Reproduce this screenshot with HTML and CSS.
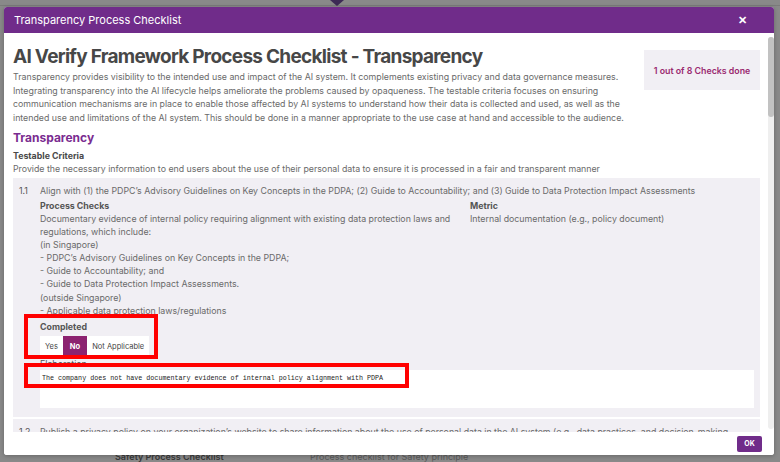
FILE: index.html
```html
<!DOCTYPE html>
<html lang="en">
<head>
<meta charset="utf-8">
<title>Transparency Process Checklist</title>
<link rel="stylesheet" href="styles.css">
</head>
<body>
<div class="page">
  <div class="page-top"><span class="page-logo"></span></div>
  <div class="page-spacer"></div>
  <div class="page-row">
    <span class="page-row-title">Safety Process Checklist</span>
    <span class="page-row-desc">Process checklist for Safety principle</span>
  </div>
</div>

<div class="modal">
  <div class="modal-header">
    <span class="modal-title">Transparency Process Checklist</span>
    <span class="modal-close">&#x2715;</span>
  </div>
  <div class="modal-main">
    <div class="modal-body">
      <div class="intro">
        <div class="intro-text">
          <h1 class="main-title">AI Verify Framework Process Checklist - Transparency</h1>
          <p class="intro-desc">Transparency provides visibility to the intended use and impact of the AI system. It complements existing privacy and data governance measures. Integrating transparency into the AI lifecycle helps ameliorate the problems caused by opaqueness. The testable criteria focuses on ensuring communication mechanisms are in place to enable those affected by AI systems to understand how their data is collected and used, as well as the intended use and limitations of the AI system. This should be done in a manner appropriate to the use case at hand and accessible to the audience.</p>
        </div>
        <div class="badge">1 out of 8 Checks done</div>
      </div>
      <h2 class="section-title">Transparency</h2>
      <h3 class="criteria-title">Testable Criteria</h3>
      <p class="criteria-desc">Provide the necessary information to end users about the use of their personal data to ensure it is processed in a fair and transparent manner</p>

      <div class="check">
        <div class="check-head">
          <span class="check-num">1.1</span>
          <span class="check-text">Align with (1) the PDPC’s Advisory Guidelines on Key Concepts in the PDPA; (2) Guide to Accountability; and (3) Guide to Data Protection Impact Assessments</span>
        </div>
        <div class="check-body">
          <div class="check-cols">
            <div class="col-process">
              <div class="label">Process Checks</div>
              <div class="text">Documentary evidence of internal policy requiring alignment with existing data protection laws and regulations, which include:<br>(in Singapore)<br>- PDPC’s Advisory Guidelines on Key Concepts in the PDPA;<br>- Guide to Accountability; and<br>- Guide to Data Protection Impact Assessments.<br>(outside Singapore)<br>- Applicable data protection laws/regulations</div>
            </div>
            <div class="col-metric">
              <div class="label">Metric</div>
              <div class="text">Internal documentation (e.g., policy document)</div>
            </div>
          </div>
          <div class="label completed-label">Completed</div>
          <div class="btn-group">
            <span class="opt">Yes</span>
            <span class="opt opt-active">No</span>
            <span class="opt">Not Applicable</span>
          </div>
          <div class="label elab-label">Elaboration</div>
          <div class="elab-box">The company does not have documentary evidence of internal policy alignment with PDPA</div>
          <span class="mark mark-completed"></span>
          <span class="mark mark-elab"></span>
        </div>
      </div>

      <div class="check check-next">
        <div class="check-head">
          <span class="check-num">1.2</span>
          <span class="check-text check-wrap">Publish a privacy policy on your organization’s website to share information about the use of personal data in the AI system (e.g., data practices, and decision-making processes)</span>
        </div>
      </div>
    </div>
    <div class="scrollbar"><div class="scroll-thumb"></div></div>
  </div>
  <div class="modal-footer">
    <button class="ok-btn">OK</button>
  </div>
</div>
</body>
</html>
```

FILE: styles.css
```css
* { box-sizing: border-box; }
html, body { margin: 0; padding: 0; }
body {
  width: 780px;
  height: 462px;
  overflow: hidden;
  background: #898989;
  font-family: Inter, "Noto Sans", sans-serif;
  position: relative;
}

/* background page (under overlay) */
.page {
  height: 462px;
  display: flex;
  flex-direction: column;
}
.page-top {
  height: 6px;
  border-bottom: 1px solid #7a7a7a;
}
.page-logo {
  display: block;
  margin-left: 330px;
  width: 14px;
  height: 6px;
  background: #3d2a55;
  clip-path: polygon(0 0, 100% 0, 50% 100%);
}
.page-spacer { flex: 1; }
.page-row {
  height: 12px;
  display: flex;
  align-items: flex-end;
  font-size: 9px;
  line-height: 10px;
  color: #3a3a3a;
  padding-left: 115px;
}
.page-row-title { font-weight: 600; width: 195px; }
.page-row-desc { color: #5a5a5a; }

/* modal */
.modal {
  position: absolute;
  left: 4px;
  top: 7px;
  width: 770px;
  height: 448px;
  background: #fff;
  border-radius: 3px;
  display: flex;
  flex-direction: column;
  overflow: hidden;
  box-shadow: 0 1px 4px rgba(0,0,0,0.25);
}
.modal-header {
  height: 26px;
  flex: none;
  background: #702c8a;
  color: #fff;
  display: flex;
  align-items: center;
  justify-content: space-between;
  padding: 0 27px 0 10px;
}
.modal-title { font-size: 11px; }
.modal-close { font-size: 11px; font-weight: 700; }

.modal-main {
  flex: 1;
  min-height: 0;
  display: flex;
}
.modal-body {
  flex: 1;
  min-width: 0;
  overflow: hidden;
  padding: 11px 8px 0 9px;
}
.scrollbar {
  width: 6px;
  flex: none;
  margin: 4px 0 3px;
  background: #efefef;
  border-radius: 3px;
}
.scroll-thumb {
  height: 80px;
  background: #c2c2c2;
  border-radius: 3px;
}

.intro {
  display: flex;
  justify-content: space-between;
  align-items: flex-start;
}
.intro-text { width: 622px; }
.main-title {
  margin: 0;
  font-size: 19px;
  line-height: 26px;
  font-weight: 700;
  color: #474747;
  letter-spacing: -0.72px;
}
.intro-desc {
  margin: 0;
  font-size: 8.8px;
  line-height: 13.5px;
  color: #6a6a6a;
}
.badge {
  margin-top: 6px;
  width: 116px;
  height: 40px;
  background: #f1eff4;
  color: #9a2a70;
  font-size: 8.8px;
  font-weight: 600;
  display: flex;
  align-items: center;
  justify-content: center;
}
.section-title {
  margin: 5px 0 0;
  font-size: 12px;
  line-height: 18px;
  font-weight: 700;
  color: #7a2c90;
}
.criteria-title {
  margin: 3px 0 0;
  font-size: 8.8px;
  line-height: 12px;
  font-weight: 700;
  color: #4a4a4a;
}
.criteria-desc {
  margin: 1px 0 0;
  font-size: 8.8px;
  line-height: 12px;
  color: #6a6a6a;
}

.check {
  background: #f1eff4;
  margin-top: 3px;
  padding: 6px 6px 9px 6px;
}
.check-next { margin-top: 2px; padding-top: 6px; }
.check-head {
  display: flex;
  font-size: 8.8px;
  line-height: 13px;
  color: #6a6a6a;
}
.check-num { width: 21px; flex: none; color: #555; }
.check-text { white-space: nowrap; }
.check-text.check-wrap { white-space: normal; }
.check-body {
  padding-left: 21px;
  position: relative;
}
.check-cols { display: flex; margin-top: 2px; }
.col-process { width: 430px; }
.label {
  font-size: 8.8px;
  line-height: 13px;
  font-weight: 700;
  color: #555;
}
.text {
  font-size: 8.8px;
  line-height: 13.1px;
  color: #6a6a6a;
}
.col-process .text { padding-right: 14px; }
.completed-label { margin-top: 3px; }
.btn-group {
  display: inline-flex;
  background: #fff;
  margin-top: 0;
  height: 20px;
}
.opt {
  font-size: 7.5px;
  color: #444;
  padding: 0 5px;
  display: flex;
  align-items: center;
}
.opt-active {
  background: #8c2270;
  color: #fff;
  font-weight: 700;
  padding: 0 7px;
}
.elab-label { margin-top: 2px; font-weight: 400; line-height: 12px; }
.elab-box {
  background: #fff;
  height: 38px;
  padding: 3px 2px;
  font-family: "Liberation Mono", "DejaVu Sans Mono", monospace;
  font-size: 6.7px;
  line-height: 10px;
  color: #222;
}
.mark {
  position: absolute;
  border: 4px solid #ff0000;
}
.mark-completed {
  left: 5px;
  top: 115px;
  width: 134px;
  height: 45px;
}
.mark-elab {
  left: 5px;
  top: 164px;
  width: 385px;
  height: 25px;
}

.modal-footer {
  height: 23px;
  flex: none;
  display: flex;
  justify-content: flex-end;
  align-items: center;
  padding-right: 12px;
  background: #fff;
}
.ok-btn {
  width: 25px;
  height: 16px;
  border: none;
  border-radius: 2px;
  background: #702c8a;
  color: #fff;
  font-family: Inter, sans-serif;
  font-size: 7px;
  font-weight: 700;
  padding: 0;
}
```
